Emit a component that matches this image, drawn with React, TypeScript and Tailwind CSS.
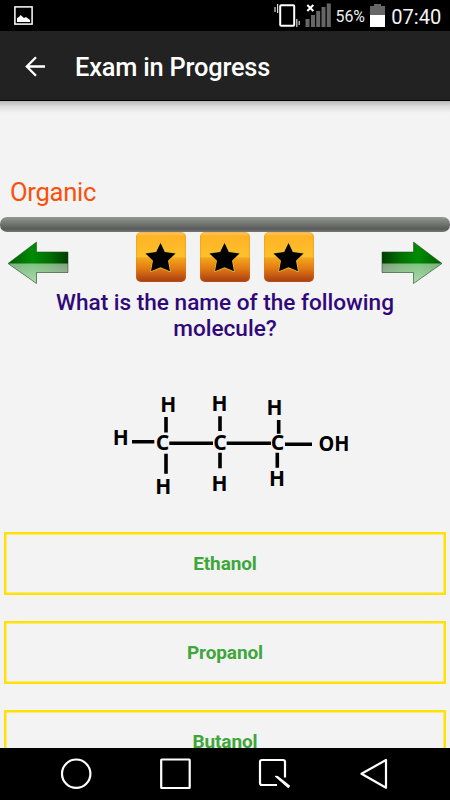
const roboto = "font-['Roboto','Liberation_Sans',sans-serif]";

function StatusBar() {
  return (
    <div className="flex h-[31px] shrink-0 items-center bg-black text-[#f2f2f2]">
      <svg width="450" height="31" viewBox="0 0 450 31">
        <rect x="14.9" y="6.9" width="17.2" height="17.2" fill="none" stroke="#fff" strokeWidth="1.500" />
        <path d="M17 22v-4l2-1 1.500-2 3.500 3 2-1 4 3v2z" fill="#fff" />
        <rect x="280.200" y="5.200" width="14" height="20.600" rx="1" fill="none" stroke="#fff" strokeWidth="2" />
        <path d="M275 7v5M277.600 4v9M296.800 19v8M299.200 21v4" stroke="#ddd" strokeWidth="1.200" />
        <path d="M305.500 19h4v8h-4zM311 15h4v12h-4zM316.200 11h4v16h-4zM321.500 7h4v20h-4zM326.800 3.500h4v23.500h-4z" fill="#666" />
        <path d="M307.300 5l6 6M313.300 5l-6 6" stroke="#fff" strokeWidth="2" />
        <path d="M370 6h4V4h7v2h4v9h-15z" fill="#666" />
        <path d="M370 15h15v12h-15z" fill="#fff" />
        <text x="335.500" y="21.800" fontSize="16.500" textLength="29.500" lengthAdjust="spacingAndGlyphs" fill="#eee">56%</text>
        <text x="391.300" y="23.700" fontSize="20.500" textLength="50" lengthAdjust="spacingAndGlyphs" fill="#f4f4f4">07:40</text>
      </svg>
    </div>
  );
}

function Header() {
  return (
    <header className="flex h-[70px] shrink-0 items-center border-b border-black bg-[#222] text-white">
      <svg className="ml-[25px] mt-[2px] shrink-0" width="21" height="22" viewBox="0 0 21 22" fill="none" stroke="#fff" strokeWidth="2.300">
        <path d="M20 10.500H2M11 1.300 1.800 10.500 11 19.700" />
      </svg>
      <h1 className="ml-[29px] mt-[2px] whitespace-nowrap text-[25.400px] leading-[28px] font-medium tracking-[-0.200px]">Exam in Progress</h1>
    </header>
  );
}

function Arrow({ flip = false }: { flip?: boolean }) {
  const outline = "M1 23.500 29.500 2v10H61v20.500H29.500v11z";
  return (
    <svg className={flip ? "-scale-x-100" : ""} width="62" height="46" viewBox="0 0 62 46">
      <defs>
        <linearGradient id="leaf" x1="0" x2="1">
          <stop offset="0" stopColor="#005c00" />
          <stop offset=".4" stopColor="#008b05" />
          <stop offset=".7" stopColor="#007000" />
          <stop offset="1" stopColor="#003d00" />
        </linearGradient>
        <linearGradient id="gloss" x1="0" y1="0" x2="0" y2="1">
          <stop offset="0" stopColor="#fff" stopOpacity=".5" />
          <stop offset="1" stopColor="#fff" stopOpacity=".68" />
        </linearGradient>
      </defs>
      <path d={outline} fill="url(#leaf)" />
      <path d="M1 23.500H61v9H29.500v11z" fill="url(#gloss)" />
      <path d={outline} fill="none" stroke="#254f25" strokeOpacity=".55" strokeWidth="1" />
    </svg>
  );
}

function Star() {
  return (
    <div className="flex h-[50px] w-[50px] items-center justify-center rounded-[5px] bg-[linear-gradient(#ffd070_0%,#ffb326_8%,#ffc02b_49%,#f5a51c_52%,#e37a14_73%,#a73b13_100%)] shadow-[inset_0_0_1px_1px_#d9822055]">
      <svg width="34" height="34" viewBox="0 0 34 34">
        <path d="M16.500 3 20.800 12 31.500 13.400 24 20.700 26 31.300 16.500 27.300 7 31.300 9 20.700 1.500 13.400 12.200 12z" fill="#000" stroke="#ebbc32" strokeWidth="1.500" strokeLinejoin="round" paintOrder="stroke" />
      </svg>
    </div>
  );
}

const atoms: [string, number, number][] = [
  ["H", 168.300, 412.300], ["H", 219.400, 411.300], ["H", 274.400, 415],
  ["H", 120.800, 445], ["C", 162.500, 449.700], ["C", 220, 449.700],
  ["C", 277.500, 449.700], ["H", 163.300, 493.700], ["H", 219.400, 491],
  ["H", 276.900, 486.300], ["OH", 333.900, 451.300],
];

function Molecule() {
  return (
    <svg className="ml-[100px] block" width="260" height="120" viewBox="100 385 260 120">
      <path d="M166 417V432.500M166 453.700V473.700M220 416.300V431M220 452.700V468.300M278.700 420V433.700M277.300 452.700V467.700" stroke="#000" strokeWidth="3.600" />
      <path d="M132 441.700H154.300M169.300 443.300H213M226.700 443.300H271M285 444.300H312" stroke="#000" strokeWidth="3.600" />
      {atoms.map(([label, x, y]) => (
        <text key={`${label}${x}`} x={x} y={y} textAnchor="middle" className="font-['Open_Sans','Noto_Sans',sans-serif] font-bold" fontSize="21" textLength={label === "OH" ? 31 : label === "H" ? 16 : 13.500} lengthAdjust="spacingAndGlyphs">{label}</text>
      ))}
    </svg>
  );
}

function Answer({ label }: { label: string }) {
  return (
    <button className="mx-1 flex h-[63px] shrink-0 items-center justify-center text-[19px] leading-[22px] font-bold tracking-[-0.100px] text-[#3ea63a] shadow-[inset_0_0_0_2.500px_#ffe205]">
      {label}
    </button>
  );
}

function NavBar() {
  return (
    <nav className="h-[52px] shrink-0 bg-black">
      <svg width="450" height="52" viewBox="0 748 450 52" fill="none" stroke="#fff" strokeWidth="2.200">
        <circle cx="76.200" cy="773.700" r="14.200" />
        <rect x="161.200" y="759.500" width="28.500" height="28.500" rx=".5" />
        <path d="M285 777.500V762q0-2-2-2H262q-2 0-2 2V783q0 2 2 2H277" />
        <path d="M275.500 776.300 277.500 776.500 289.500 786 288.300 787.500z" fill="#fff" strokeWidth="1.200" strokeLinejoin="round" />
        <path d="M386 760V787.700L361.500 773.800z" strokeLinejoin="round" />
      </svg>
    </nav>
  );
}

export default function App() {
  return (
    <div className={`flex h-[800px] w-[450px] flex-col overflow-hidden bg-[#f3f3f3] ${roboto}`}>
      <StatusBar />
      <Header />
      <main className="flex min-h-0 flex-1 flex-col overflow-hidden">
        <div className="h-[12px] shrink-0 bg-[linear-gradient(#b8b8b8,#dddddd_45%,#f3f3f3)]" />
        <h2 className="mt-[64px] ml-[10px] shrink-0 text-[25.600px] leading-[30px] tracking-[-0.300px] text-[#f9500c]">Organic</h2>
        <div className="mt-[10px] h-[15px] shrink-0 rounded-[7px] bg-[linear-gradient(#959795,#585b58_80%,#777)]" />
        <div className="flex h-[51px] shrink-0 justify-between px-[7px]">
          <div className="pt-[8px]"><Arrow /></div>
          <div className="flex gap-[14px]"><Star /><Star /><Star /></div>
          <div className="pt-[8px]"><Arrow flip /></div>
        </div>
        <p className="mt-[7px] shrink-0 text-center text-[22.600px] leading-[26px] font-medium text-[#300878]">
          What is the name of the following<br />molecule?
        </p>
        <div className="mt-[43px] shrink-0"><Molecule /></div>
        <div className="mt-[27px] flex shrink-0 flex-col gap-[26px]">
          <Answer label="Ethanol" />
          <Answer label="Propanol" />
          <Answer label="Butanol" />
        </div>
      </main>
      <NavBar />
    </div>
  );
}
